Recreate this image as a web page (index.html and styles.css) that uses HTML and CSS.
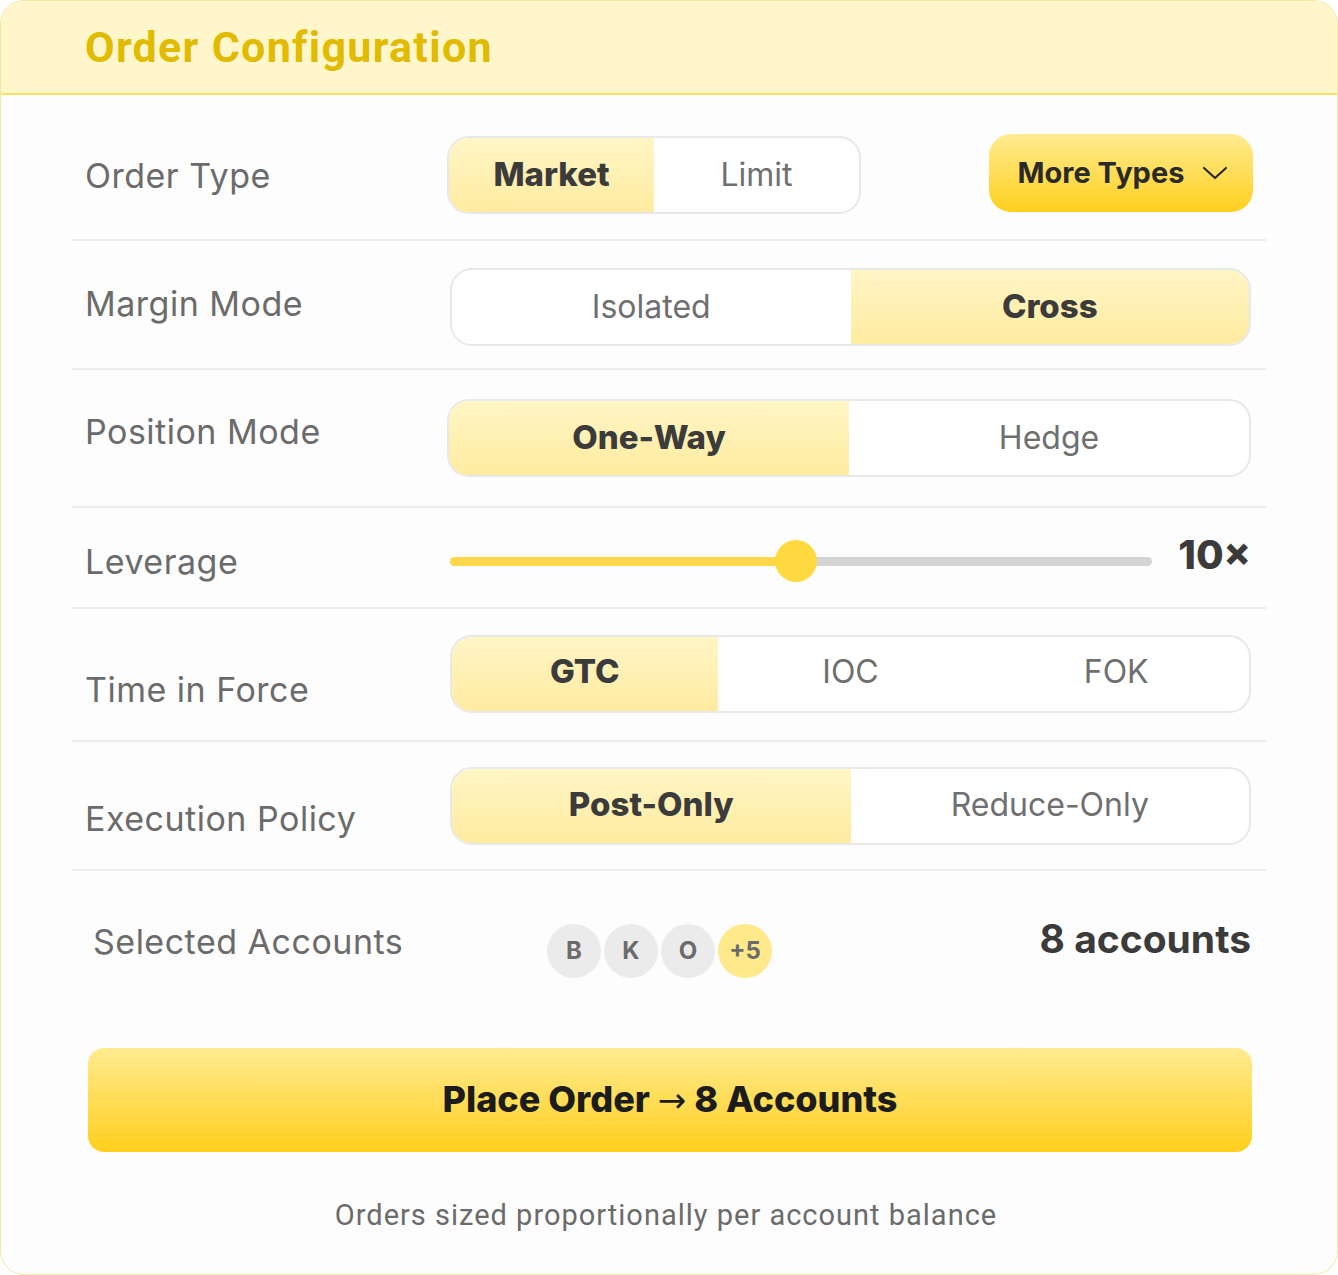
FILE: index.html
```html
<!DOCTYPE html>
<html lang="en">
<head>
    <meta charset="UTF-8">
    <meta name="viewport" content="width=device-width, initial-scale=1.0">
    <title>Order Configuration</title>
    <link rel="stylesheet" href="styles.css">
</head>
<body>
    <div class="card">
        <!-- Header -->
        <header class="card-header">
            <h1>Order Configuration</h1>
        </header>

        <div class="rows">
            <!-- Order Type -->
            <div class="row row-type">
                <div class="label">Order Type</div>
                <div class="seg seg-small">
                    <div class="opt active">Market</div>
                    <div class="opt">Limit</div>
                </div>
                <button class="more-btn">More Types
                    <svg width="26" height="16" viewBox="0 0 26 16"><path d="M2 3 L13 13 L24 3" fill="none" stroke="#2a2a2a" stroke-width="2.2" stroke-linecap="round" stroke-linejoin="round"/></svg>
                </button>
            </div>

            <!-- Margin Mode -->
            <div class="row row-margin">
                <div class="label">Margin Mode</div>
                <div class="seg">
                    <div class="opt">Isolated</div>
                    <div class="opt active">Cross</div>
                </div>
            </div>

            <!-- Position Mode -->
            <div class="row row-position">
                <div class="label">Position Mode</div>
                <div class="seg">
                    <div class="opt active">One-Way</div>
                    <div class="opt">Hedge</div>
                </div>
            </div>

            <!-- Leverage -->
            <div class="row row-leverage">
                <div class="label">Leverage</div>
                <div class="slider">
                    <div class="track">
                        <div class="fill" style="width: 49.3%"></div>
                        <div class="thumb" style="left: 49.3%"></div>
                    </div>
                </div>
                <div class="lev-value">10×</div>
            </div>

            <!-- Time in Force -->
            <div class="row row-tif">
                <div class="label">Time in Force</div>
                <div class="seg">
                    <div class="opt active">GTC</div>
                    <div class="opt">IOC</div>
                    <div class="opt">FOK</div>
                </div>
            </div>

            <!-- Execution Policy -->
            <div class="row row-exec">
                <div class="label">Execution Policy</div>
                <div class="seg">
                    <div class="opt active">Post-Only</div>
                    <div class="opt">Reduce-Only</div>
                </div>
            </div>

            <!-- Selected Accounts -->
            <div class="row row-accounts">
                <div class="label">Selected Accounts</div>
                <div class="avatars">
                    <span class="avatar">B</span>
                    <span class="avatar">K</span>
                    <span class="avatar">O</span>
                    <span class="avatar more">+5</span>
                </div>
                <div class="acc-count">8 accounts</div>
            </div>
        </div>

        <button class="place-btn">Place Order <span class="arrow">→</span> 8 Accounts</button>

        <p class="note">Orders sized proportionally per account balance</p>
    </div>
</body>
</html>
```

FILE: styles.css
```css
body {
    margin: 0;
    font-family: 'Inter', 'Noto Sans', sans-serif;
    background-color: #ffffff;
}

.card {
    width: 1338px;
    height: 1275px;
    box-sizing: border-box;
    background: #fdfdfd;
    border: 1px solid #f3e7a6;
    border-radius: 24px;
    overflow: hidden;
}

/* Header */
.card-header {
    height: 94px;
    box-sizing: border-box;
    background: #fff7cb;
    border-bottom: 2px solid #fde066;
    padding-left: 84px;
    display: flex;
    align-items: center;
}

.card-header h1 {
    margin: 0;
    font-family: 'Roboto', sans-serif;
    font-size: 43px;
    font-weight: 700;
    color: #e1bb00;
    letter-spacing: 1.3px;
}

/* Rows */
.rows {
    margin: 0 71px 0 71px;
}

.row {
    display: flex;
    align-items: center;
    padding-left: 13px;
    padding-right: 15px;
    border-bottom: 2px solid #ececec;
}

.label {
    width: 362px;
    flex-shrink: 0;
    font-size: 34px;
    letter-spacing: 0.5px;
    color: #6b6b6b;
}

.row-type { padding-top: 41px; padding-bottom: 25px; }
.row-margin { padding-top: 27px; padding-bottom: 22px; }
.row-margin .label { width: 365px; margin-bottom: 8px; }
.row-position { padding-top: 29px; padding-bottom: 29px; }
.row-position .label { margin-bottom: 14px; }
.row-leverage { padding-top: 31px; padding-bottom: 24px; }
.row-leverage .label { width: 365px; }
.row-tif { padding-top: 26px; padding-bottom: 27px; }
.row-tif .label { width: 365px; margin-top: 30px; }
.row-exec { padding-top: 25px; padding-bottom: 24px; }
.row-exec .label { width: 365px; margin-top: 24px; }

.row-accounts {
    border-bottom: none;
    padding-top: 44px;
    padding-left: 21px;
}
.row-accounts .label { width: 454px; margin-bottom: 18px; }

/* Segmented control */
.seg {
    flex: 1;
    display: flex;
    height: 78px;
    box-sizing: border-box;
    border: 2px solid #e8e8e8;
    border-radius: 22px;
    background: #ffffff;
    overflow: hidden;
}

.seg-small {
    flex: 0 0 414px;
}

.seg .opt {
    flex: 1;
    display: flex;
    justify-content: center;
    align-items: center;
    font-size: 32px;
    color: #6f6f6f;
    padding-bottom: 2px;
}

.seg .opt.active {
    background: linear-gradient(180deg, #fff6c6, #ffeba0);
    color: #3b3b3b;
    font-size: 33px;
    font-weight: 800;
}

.row-tif .seg .opt { padding-bottom: 6px; }
.row-exec .seg .opt { padding-bottom: 4px; }

.more-btn {
    margin-left: auto;
    margin-right: -2px;
    margin-top: -4px;
    height: 78px;
    width: 264px;
    border: none;
    border-radius: 22px;
    background: linear-gradient(180deg, #ffeb91, #ffd01e);
    font-family: 'Inter', sans-serif;
    font-size: 29px;
    font-weight: 700;
    color: #2a2a2a;
    display: flex;
    align-items: center;
    justify-content: center;
    gap: 18px;
    padding: 0 0 2px 4px;
}

.more-btn svg {
    margin-top: 2px;
}

/* Leverage slider */
.slider {
    width: 702px;
    height: 44px;
    display: flex;
    align-items: center;
}

.track {
    position: relative;
    width: 100%;
    height: 9px;
    background: #d4d4d4;
    border-radius: 5px;
}

.fill {
    height: 100%;
    background: #ffd84a;
    border-radius: 5px;
}

.thumb {
    position: absolute;
    top: 50%;
    width: 42px;
    height: 42px;
    margin: -21px 0 0 -21px;
    background: #ffd940;
    border-radius: 50%;
}

.lev-value {
    margin-left: auto;
    font-size: 40px;
    line-height: 40px;
    font-weight: 800;
    color: #3b3b3b;
    margin-top: -6px;
    margin-bottom: 6px;
}

/* Accounts */
.avatars {
    display: flex;
    gap: 3px;
}

.avatar {
    width: 54px;
    height: 54px;
    border-radius: 50%;
    background: #ebebeb;
    color: #6b6b6b;
    font-size: 24px;
    font-weight: 700;
    display: flex;
    justify-content: center;
    align-items: center;
}

.avatar.more {
    background: #ffe98a;
}

.acc-count {
    margin-left: auto;
    font-size: 39px;
    font-weight: 700;
    color: #3b3b3b;
    margin-bottom: 24px;
}

/* Place order button */
.place-btn {
    display: block;
    margin: 62px 0 0 87px;
    width: 1164px;
    height: 104px;
    border: none;
    border-radius: 16px;
    background: linear-gradient(180deg, #ffeb91, #ffcf1c);
    font-family: 'Inter', sans-serif;
    font-size: 36px;
    font-weight: 800;
    color: #1c1c1c;
    padding-bottom: 3px;
}

.place-btn .arrow {
    font-family: 'DejaVu Sans', sans-serif;
    font-weight: 400;
    font-size: 34px;
}

.note {
    margin: 46px 0 0 0;
    text-align: center;
    font-family: 'Roboto', sans-serif;
    font-size: 29px;
    letter-spacing: 1px;
    color: #6b6b6b;
    padding-right: 6px;
}
```
